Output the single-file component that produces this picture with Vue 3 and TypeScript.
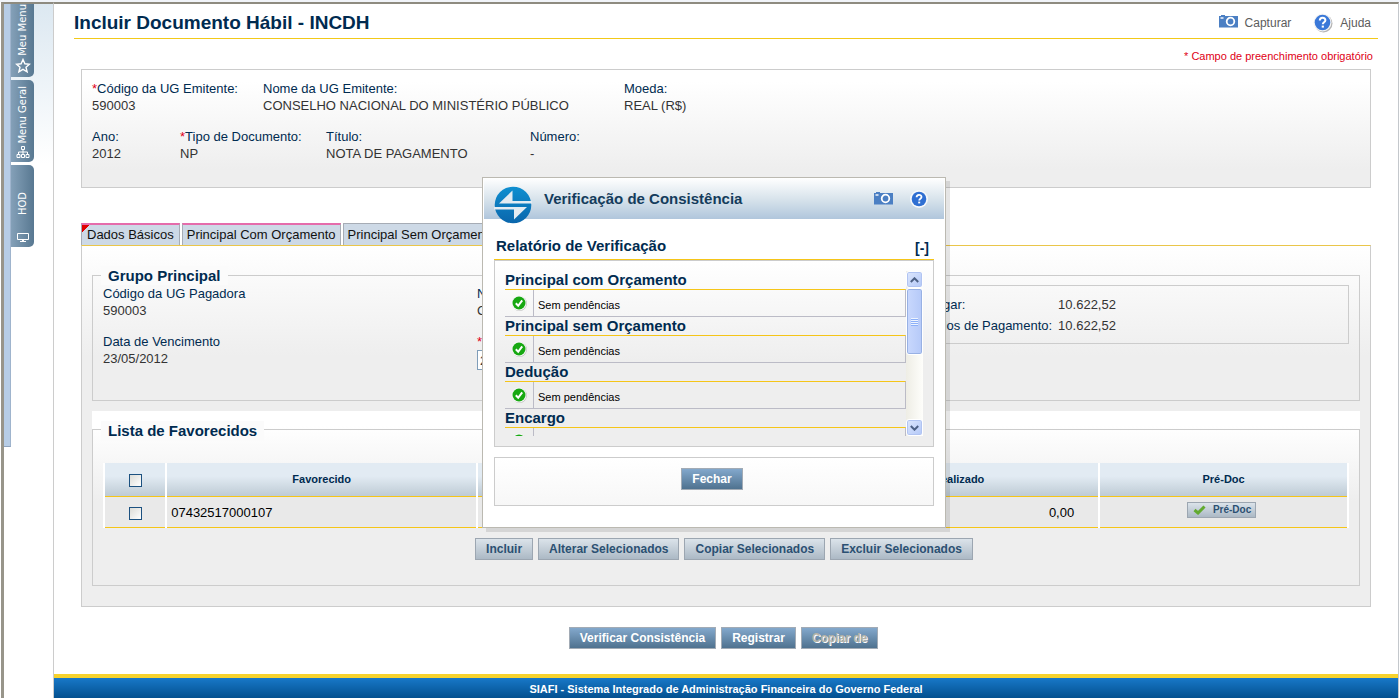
<script setup lang="ts">
import { ref } from 'vue'

interface Field {
  label: string
  value: string
  required?: boolean
}

const issuer: Field[] = [
  { label: 'Código da UG Emitente:', value: '590003', required: true },
  { label: 'Nome da UG Emitente:', value: 'CONSELHO NACIONAL DO MINISTÉRIO PÚBLICO' },
  { label: 'Moeda:', value: 'REAL (R$)' },
]
const documentFields: Field[] = [
  { label: 'Ano:', value: '2012' },
  { label: 'Tipo de Documento:', value: 'NP', required: true },
  { label: 'Título:', value: 'NOTA DE PAGAMENTO' },
  { label: 'Número:', value: '-' },
]
const sections = ['Principal com Orçamento', 'Principal sem Orçamento', 'Dedução', 'Encargo']
const listActions = ['Incluir', 'Alterar Selecionados', 'Copiar Selecionados', 'Excluir Selecionados']
const processDate = ref('23/05/2012')
const allSelected = ref(false)
const rowSelected = ref(false)
</script>

<template>
  <div class="page">
    <nav class="side" aria-label="Menus">
      <div class="rail"></div>
      <div class="side-tabs">
        <button type="button" class="side-tab first">
          <span class="vertical">Meu Menu</span>
          <svg width="16" height="16" viewBox="0 0 16 16"><path d="M8 1.5l1.9 4.3 4.6.4-3.5 3 1.1 4.6L8 11.3l-4.1 2.5L5 9.2l-3.500-3 4.600-.4z" fill="none" stroke="#fff" stroke-width="1.400" /></svg>
        </button>
        <button type="button" class="side-tab">
          <span class="vertical">Menu Geral</span>
          <svg width="14" height="12" viewBox="0 0 14 12"><path d="M5.500.5h3v3h-3zM7 4v4M2.500 8V6h9v2M1 8.500h3v3H1zM5.500 8.500h3v3h-3zM10 8.500h3v3h-3z" fill="none" stroke="#fff" /></svg>
        </button>
        <button type="button" class="side-tab last">
          <span class="vertical">HOD</span>
          <svg width="12" height="10" viewBox="0 0 12 10"><path d="M.5.5h11v6H.5z" fill="none" stroke="#fff" /><path d="M5 7h2v1h2v1H3V8h2z" fill="#fff" /></svg>
        </button>
      </div>
    </nav>

    <main class="content">
      <header class="title-bar">
        <h1>Incluir Documento Hábil - INCDH</h1>
        <div class="tools">
          <a href="#capturar">
            <svg class="camera" width="19" height="13" viewBox="0 0 19 13"><path d="M0 1h2V0h4v1h13v11.500H0z" fill="#4b7fc3" /><path d="M1.500 3h3" stroke="#fff" stroke-width="1.400" /><circle cx="11.500" cy="6.500" r="3.800" fill="none" stroke="#fff" stroke-width="1.800" /></svg>
            Capturar
          </a>
          <a href="#ajuda">
            <svg width="20" height="20" viewBox="0 0 20 20"><circle cx="10.500" cy="10.500" r="9" fill="#b4b4b4" /><circle cx="9.500" cy="9.500" r="9" fill="#f4f4f4" /><circle cx="9.500" cy="9.500" r="7.800" fill="#3a78d8" /><path d="M6.800 7.600c0-3.600 5.600-3.600 5.600-.4 0 2-2.600 2-2.600 4" fill="none" stroke="#fff" stroke-width="2" /><path d="M8.700 12.600h2.200v2H8.700z" fill="#fff" /></svg>
            Ajuda
          </a>
        </div>
      </header>
      <p class="mandatory">* Campo de preenchimento obrigatório</p>

      <section class="summary">
        <dl class="issuer">
          <div v-for="field in issuer" :key="field.label">
            <dt><i v-if="field.required">*</i>{{ field.label }}</dt>
            <dd>{{ field.value }}</dd>
          </div>
        </dl>
        <dl class="document">
          <div v-for="field in documentFields" :key="field.label">
            <dt><i v-if="field.required">*</i>{{ field.label }}</dt>
            <dd>{{ field.value }}</dd>
          </div>
        </dl>
      </section>

      <div class="tabs" role="tablist">
        <button type="button" role="tab" class="tab filled current" aria-selected="true">Dados Básicos</button>
        <button type="button" role="tab" class="tab filled" aria-selected="false">Principal Com Orçamento</button>
        <button type="button" role="tab" class="tab" aria-selected="false">Principal Sem Orçamento</button>
      </div>

      <section class="panel">
        <div class="group payment">
          <h2>Grupo Principal</h2>
          <div class="group-body">
            <dl class="payer">
              <div>
                <dt>Código da UG Pagadora</dt>
                <dd>590003</dd>
              </div>
              <div>
                <dt>Nome da UG Pagadora</dt>
                <dd>CONSELHO NACIONAL DO MINISTÉRIO PÚBLICO</dd>
              </div>
              <div>
                <dt>Data de Vencimento</dt>
                <dd>23/05/2012</dd>
              </div>
              <div>
                <dt><label for="process"><i>*</i>Processo</label></dt>
                <dd><input id="process" v-model="processDate" type="text" /></dd>
              </div>
            </dl>
            <dl class="totals">
              <dt>Líquido a Pagar:</dt>
              <dd>10.622,52</dd>
              <dt>Total em Dados de Pagamento:</dt>
              <dd>10.622,52</dd>
            </dl>
          </div>
        </div>

        <div class="group-wrap">
          <div class="group payees">
            <h2>Lista de Favorecidos</h2>
            <table>
              <colgroup>
                <col class="c-check" /><col class="c-wide" /><col class="c-wide" /><col class="c-wide" /><col class="c-doc" />
              </colgroup>
              <thead>
                <tr>
                  <th><input v-model="allSelected" type="checkbox" aria-label="Selecionar todos" /></th>
                  <th>Favorecido</th>
                  <th>Valor</th>
                  <th>Valor Realizado</th>
                  <th>Pré-Doc</th>
                </tr>
              </thead>
              <tbody>
                <tr>
                  <td class="middle"><input v-model="rowSelected" type="checkbox" aria-label="Selecionar 07432517000107" /></td>
                  <td>07432517000107</td>
                  <td class="amount">10.622,52</td>
                  <td class="amount">0,00</td>
                  <td class="middle">
                    <button type="button" class="btn small">
                      <svg width="13" height="10" viewBox="0 0 13 10"><path d="M1.500 5l3.500 3L11.500 1.500" fill="none" stroke="#62aa30" stroke-width="3" /></svg>
                      Pré-Doc
                    </button>
                  </td>
                </tr>
              </tbody>
            </table>
            <div class="actions">
              <button v-for="action in listActions" :key="action" type="button" class="btn">{{ action }}</button>
            </div>
          </div>
        </div>
      </section>

      <div class="actions page-actions">
        <button type="button" class="btn dark">Verificar Consistência</button>
        <button type="button" class="btn dark">Registrar</button>
        <button type="button" class="btn dark" disabled>Copiar de</button>
      </div>

      <footer>SIAFI - Sistema Integrado de Administração Financeira do Governo Federal</footer>
    </main>

    <section class="modal" role="dialog" aria-labelledby="modal-title">
      <header class="modal-head">
        <svg class="logo" width="38" height="38" viewBox="0 0 38 38">
          <defs>
            <linearGradient id="disc" x1="0" y1="0" x2="0" y2="1"><stop offset="0" stop-color="#0f8fd0" /><stop offset="1" stop-color="#0a66ac" /></linearGradient>
          </defs>
          <circle cx="19" cy="19" r="18.300" fill="url(#disc)" />
          <path d="M38 17.500H5L18.500 4.500V15H38z" fill="#e3ebf2" />
          <path d="M0 21h33L20 33.500V23.500H0z" fill="#e3ebf2" />
        </svg>
        <h2 id="modal-title">Verificação de Consistência</h2>
        <a href="#capturar-relatorio" aria-label="Capturar">
          <svg width="19" height="13" viewBox="0 0 19 13"><path d="M0 1h2V0h4v1h13v11.500H0z" fill="#4b7fc3" /><path d="M1.500 3h3" stroke="#fff" stroke-width="1.400" /><circle cx="11.500" cy="6.500" r="3.800" fill="none" stroke="#fff" stroke-width="1.800" /></svg>
        </a>
        <a href="#ajuda-relatorio" aria-label="Ajuda">
          <svg width="18" height="18" viewBox="0 0 18 18"><circle cx="9" cy="9" r="9" fill="#f6f8fa" /><circle cx="9" cy="9" r="7.300" fill="#2f6fd2" /><path d="M6.600 7.300c0-3.200 4.900-3.200 4.900-.3 0 1.700-2.300 1.700-2.300 3.400" fill="none" stroke="#fff" stroke-width="1.800" /><path d="M8.200 11.600h2v1.800h-2z" fill="#fff" /></svg>
        </a>
      </header>

      <div class="modal-body">
        <div class="report-head">
          <h3>Relatório de Verificação</h3>
          <button type="button">[-]</button>
        </div>
        <div class="report">
          <div class="results">
            <section v-for="name in sections" :key="name">
              <h4>{{ name }}</h4>
              <div class="result">
                <span class="mark">
                  <svg width="16" height="16" viewBox="0 0 16 16"><circle cx="8.500" cy="8.500" r="7.500" fill="#c2c2c2" /><circle cx="8" cy="8" r="7.400" fill="#f8f8f8" /><circle cx="8" cy="8" r="6.500" fill="#17a812" /><path d="M4.800 8.300l2.400 2.500 4-5.500" fill="none" stroke="#fff" stroke-width="2" /></svg>
                </span>
                <span class="message">Sem pendências</span>
              </div>
            </section>
          </div>
          <div class="scrollbar">
            <button type="button" aria-label="Rolar para cima">
              <svg width="9" height="6" viewBox="0 0 9 6"><path d="M.8 5L4.500 1.300 8.200 5" fill="none" stroke="#4d6185" stroke-width="2" /></svg>
            </button>
            <div class="thumb"></div>
            <button type="button" class="down" aria-label="Rolar para baixo">
              <svg width="9" height="6" viewBox="0 0 9 6"><path d="M.8 1l3.700 3.700L8.200 1" fill="none" stroke="#4d6185" stroke-width="2" /></svg>
            </button>
          </div>
        </div>
        <div class="close-box">
          <button type="button" class="btn dark">Fechar</button>
        </div>
      </div>
    </section>
  </div>
</template>

<style>
body {
  margin: 0;
}
</style>

<style scoped>
.page,
.page * {
  box-sizing: border-box;
}
.page {
  position: relative;
  display: flex;
  min-height: 100vh;
  border-top: 2px solid #f1f4f9;
  background: #fff;
  color: #333;
  font: 13px/17px "Liberation Sans", Arial, sans-serif;
  overflow: hidden;
}
h1, h2, h3, h4, p, dl, dd {
  margin: 0;
}
button, input {
  font: inherit;
  margin: 0;
}
i {
  color: #e00016;
  font-style: normal;
}

/* Side menus */
.side {
  display: flex;
  flex: none;
  width: 53px;
  margin-left: 1px;
  border-top: 2px solid #8e8b80;
  border-left: 3px solid #98958a;
  border-right: 1px solid #ccc;
  background: linear-gradient(#dce8f1, #fff 160px);
}
.rail {
  flex: none;
  width: 7px;
  height: 443px;
  border-right: 1px solid #9fb4cd;
  border-bottom: 1px solid #8ea3bd;
  background: #b7cde6;
}
.side-tabs {
  display: flex;
  flex-direction: column;
  gap: 3px;
}
.side-tab {
  display: flex;
  flex-direction: column;
  align-items: center;
  justify-content: flex-end;
  gap: 2px;
  width: 23px;
  height: 82px;
  padding: 0 0 4px;
  border: 0;
  border-radius: 0 5px 5px 0;
  background: linear-gradient(90deg, #84a0b8, #587891);
  color: #fff;
  font: 10px/12px "DejaVu Sans", sans-serif;
}
.side-tab.first {
  height: 73px;
  padding-bottom: 3px;
  border-radius: 0 0 5px 0;
}
.side-tab.last {
  gap: 18px;
}
.vertical {
  writing-mode: vertical-rl;
  transform: rotate(180deg);
  white-space: nowrap;
}

/* Page heading */
.content {
  display: flex;
  flex-direction: column;
  flex: 1;
  min-width: 0;
  margin-right: 1px;
  border-top: 2px solid #8e8b80;
  border-right: 1px solid #c4c8cc;
}
.title-bar {
  display: flex;
  justify-content: space-between;
  align-items: center;
  height: 35px;
  margin: 0 20px;
  padding-top: 4px;
  border-bottom: 1px solid #f2c919;
}
h1 {
  color: #002b50;
  font-size: 19px;
  line-height: 24px;
}
.tools {
  display: flex;
  gap: 22px;
  padding-right: 7px;
}
.tools a {
  display: flex;
  align-items: center;
  gap: 7px;
  color: #5c5c5c;
  font-size: 12px;
  text-decoration: none;
}
.camera {
  margin-bottom: 3px;
}
.mandatory {
  margin: 9px 25px 4px;
  color: #e00016;
  font-size: 11px;
  text-align: right;
}

/* Document summary */
dt {
  color: #002b50;
}
.summary {
  height: 119px;
  margin: 0 27px;
  padding: 10px;
  border: 1px solid #ccc;
  background: linear-gradient(#fff 10%, #eee 85%);
}
.issuer,
.document {
  display: grid;
  white-space: nowrap;
}
.issuer {
  grid-template-columns: 171px 361px 1fr;
  margin-bottom: 14px;
}
.document {
  grid-template-columns: 88px 146px 204px 1fr;
}

/* Tabs and main panel */
.tabs {
  display: flex;
  gap: 2px;
  margin: 35px 27px 0;
}
.tab {
  height: 22px;
  padding: 0 4px;
  border: 1px solid #a6acb5;
  border-bottom: 0;
  background: #cdd9e6;
  color: #111;
  line-height: 20px;
}
.tab.filled {
  border-top: 2px solid #e56cab;
}
.tab.current {
  padding: 0 5px;
  background: linear-gradient(135deg, #e00000 5px, #cdd9e6 5px);
}
.panel {
  margin: 0 27px;
  padding: 20px 10px;
  border: 1px solid #ccc;
  border-top-color: #eac64a;
  background: linear-gradient(#fff, #eee 110px);
}
.group {
  position: relative;
  display: flow-root;
  border: 1px solid #ccc;
}
.payment {
  height: 126px;
  margin-top: 9px;
}
.group h2 {
  width: fit-content;
  margin: -10px 0 0 8px;
  padding: 0 7px;
  background: #fbfbfb;
  color: #002b50;
  font-size: 15px;
  line-height: 20px;
}
.payment h2 {
  line-height: 19px;
}
.group-body {
  display: flex;
  justify-content: space-between;
}
.payer {
  display: grid;
  grid-template-columns: 374px 300px;
  gap: 14px 0;
  align-content: start;
  padding-left: 10px;
  white-space: nowrap;
}
.payer input {
  width: 150px;
  height: 20px;
  padding: 0 2px;
  border: 1px solid #7f9db9;
  color: #333;
}
.totals {
  display: grid;
  grid-template-columns: auto 1fr;
  gap: 4px 6px;
  width: 490px;
  height: 59px;
  margin-right: 10px;
  padding: 10px;
  border: 1px solid #ccc;
}
.group-wrap {
  margin-top: 10px;
  padding-top: 18px;
  background: linear-gradient(#fff 15px, #eee 90px);
}
.payees {
  height: 157px;
}
.payees h2 {
  margin-top: -9px;
}

/* Payee table */
table {
  width: calc(100% - 20px);
  margin: 22px 10px 0;
  border-collapse: collapse;
  table-layout: fixed;
  color: #000;
}
.c-check {
  width: 5%;
}
.c-wide {
  width: 25%;
}
.c-doc {
  width: 20%;
}
th {
  height: 33px;
  padding: 1px 0 0;
  border: solid #fff;
  border-width: 0 2px;
  border-bottom: 1px solid #f5c518;
  background: linear-gradient(#e2ebf3 40%, #becbd5);
  color: #002b50;
  font-size: 11px;
}
td {
  height: 31px;
  padding: 1px 4px 0;
  border: solid #fff;
  border-width: 0 2px;
  border-bottom: 1px solid #f5c518;
  background: #e9e9e9;
}
.middle {
  text-align: center;
}
td.amount {
  padding-right: 24px;
  text-align: right;
}
input[type="checkbox"] {
  appearance: none;
  display: inline-block;
  width: 13px;
  height: 13px;
  border: 1px solid #1c5180;
  background: linear-gradient(135deg, #dcdcd7, #fff);
  vertical-align: middle;
}

/* Buttons */
.actions {
  display: flex;
  justify-content: center;
  gap: 5px;
  margin-top: 10px;
}
.payees .actions {
  padding-right: 4px;
}
.btn {
  height: 22px;
  padding: 0 10px;
  border: 1px solid #9ca6b1;
  background: linear-gradient(#dbe3ea, #acb9c5);
  color: #2b5072;
  font-size: 12px;
  font-weight: bold;
  line-height: 20px;
  white-space: nowrap;
}
.btn.dark {
  border-color: #a2abb5;
  background: linear-gradient(#83a8cc, #4f728f);
  color: #fff;
}
.btn.dark:disabled {
  color: #b5b3a7;
  text-shadow: 1px 1px 0 #fff;
}
.btn.small {
  display: inline-flex;
  align-items: center;
  gap: 7px;
  height: 16px;
  margin: 0 4px 4px 0;
  padding: 0 4px 0 5px;
  font-size: 10px;
  line-height: 14px;
  vertical-align: middle;
}
.page-actions {
  margin-top: 20px;
  padding-right: 5px;
}
footer {
  height: 24px;
  margin-top: auto;
  padding-top: 1px;
  border-top: 4px solid #f7d22c;
  background: linear-gradient(#1878c8, #03508f);
  color: #fff;
  font-size: 11px;
  font-weight: bold;
  line-height: 20px;
  text-align: center;
}

/* Consistency dialog */
.modal {
  position: absolute;
  top: 175px;
  left: calc(50% - 218px);
  width: 464px;
  border: 1px solid #bbb9b1;
  background: #fff;
  box-shadow: 4px 4px 0 rgb(0 0 0 / 10%);
}
.modal-head {
  display: flex;
  align-items: center;
  height: 41px;
  margin: 0 1px;
  padding: 0 16px 0 10px;
  background: linear-gradient(#fff, #d9e4ec 50%, #b0c6dc);
}
.logo {
  align-self: flex-start;
  flex: none;
  margin-top: 8px;
}
.modal-head h2 {
  flex: 1;
  margin-left: 12px;
  color: #143c5c;
  font-size: 15px;
}
.modal-head a {
  display: flex;
  margin-left: 17px;
}
.modal-body {
  padding: 17px 11px 21px;
}
.report-head {
  display: flex;
  justify-content: space-between;
  height: 24px;
  padding: 0 5px 0 2px;
  border-bottom: 1px solid #f5c518;
  color: #002b50;
}
.report-head h3 {
  font-size: 15px;
  line-height: 20px;
}
.report-head button {
  padding: 0;
  border: 0;
  background: none;
  color: #002b50;
  font-size: 14px;
  font-weight: bold;
  line-height: 20px;
}
.report {
  display: flex;
  height: 187px;
  padding: 10px;
  border: 1px solid #ccc;
  background: linear-gradient(#fff, #eee 100px);
}
.results {
  flex: 1;
  height: 165px;
  overflow: hidden;
}
h4 {
  color: #002b50;
  font-size: 15px;
  line-height: 18px;
}
.result {
  display: flex;
  height: 28px;
  border: solid #bbbbc6;
  border-width: 1px 1px 1px 0;
  border-top-color: #f5c518;
  color: #000;
  font-size: 11px;
}
.mark {
  display: grid;
  place-items: center;
  width: 29px;
  border-right: 1px solid #bbbbc6;
}
.message {
  padding: 7px 4px 0;
}
.scrollbar {
  display: flex;
  flex-direction: column;
  width: 17px;
  background: linear-gradient(90deg, #eeede5, #fefefb);
}
.scrollbar button {
  display: grid;
  place-items: center;
  height: 17px;
  padding: 0;
  border: 1px solid #fff;
  border-radius: 3px;
  background: linear-gradient(135deg, #dde7fd, #b3c8f8);
  box-shadow: inset 0 0 0 1px #b1c4f2;
}
.scrollbar .down {
  margin-top: auto;
}
.thumb {
  display: grid;
  place-items: center;
  height: 67px;
  border: 1px solid #fff;
  border-radius: 3px;
  background: linear-gradient(90deg, #c9d8fd, #b5c9f8);
  box-shadow: inset 0 0 0 1px #98b1e4;
}
.thumb::before {
  content: "";
  width: 7px;
  height: 8px;
  background: repeating-linear-gradient(#eef4fe 0 1px, #8cb0f8 1px 2px);
}
.close-box {
  display: flex;
  justify-content: center;
  align-items: flex-start;
  height: 49px;
  margin-top: 10px;
  padding: 10px 4px 0 0;
  border: 1px solid #ccc;
  background: linear-gradient(#fff, #f7f7f7);
}
</style>
